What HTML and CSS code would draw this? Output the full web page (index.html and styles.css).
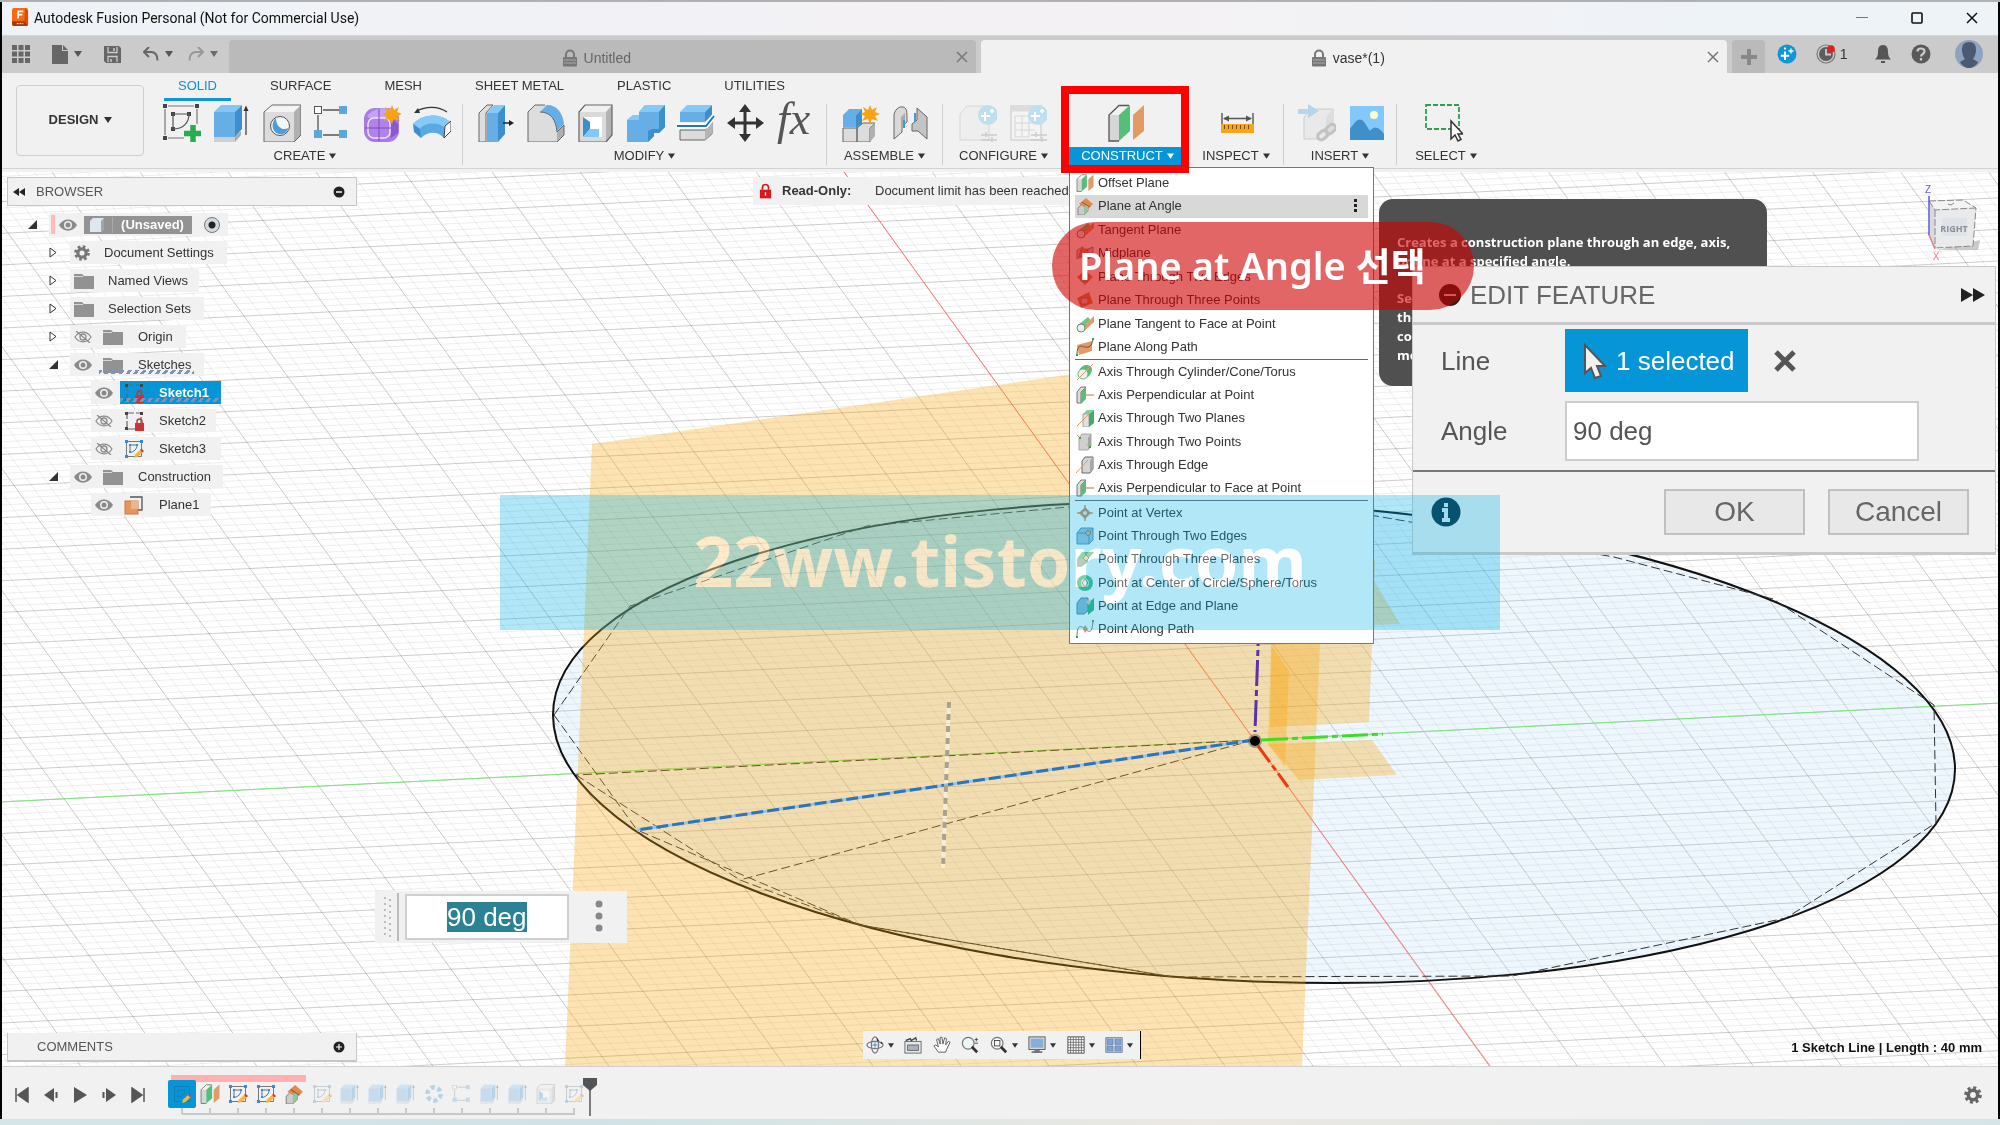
FILE: index.html
```html
<!DOCTYPE html>
<html lang="en">
<head>
<meta charset="utf-8">
<title>Autodesk Fusion Personal (Not for Commercial Use)</title>
<link rel="stylesheet" href="styles.css">
<script src="scene.js" defer></script>
</head>
<body>
<svg class="defs" aria-hidden="true">
  <symbol id="caret" viewBox="0 0 8 6"><path d="M0 0H8L4 6Z" fill="currentColor"/></symbol>
  <symbol id="lock" viewBox="0 0 16 18"><path d="M4 8V5.500a4 4 0 0 1 8 0V8" fill="none" stroke="currentColor" stroke-width="2"/><rect x="1" y="8" width="14" height="9.500" rx="1" fill="currentColor"/><path d="M2 11H14M2 14H14" stroke="#aaa" stroke-width="1"/></symbol>
  <symbol id="close" viewBox="0 0 12 12"><path d="M1 1L11 11M11 1L1 11" stroke="currentColor" stroke-width="1.500"/></symbol>
  <symbol id="eye" viewBox="0 0 18 12"><path d="M0 6C4-1.500 14-1.500 18 6C14 13.500 4 13.500 0 6Z" fill="#8a8a8a"/><circle cx="9" cy="6" r="4" fill="#f1f1f1"/><circle cx="9" cy="6" r="2.500" fill="#8a8a8a"/></symbol>
  <symbol id="eye-off" viewBox="0 0 18 12"><path d="M1 6C5-.500 13-.500 17 6C13 12.500 5 12.500 1 6Z" fill="none" stroke="#8a8a8a" stroke-width="1.200"/><circle cx="9" cy="6" r="3" fill="none" stroke="#8a8a8a" stroke-width="1.300"/><path d="M2 0L16 12" stroke="#8a8a8a" stroke-width="1.300"/></symbol>
  <symbol id="folder" viewBox="0 0 20 16"><path d="M0 1H8L10 3H20V16H0Z" fill="#929292"/><path d="M0 3.500H9" stroke="#d8d8d8"/></symbol>
  <symbol id="gear" viewBox="0 0 18 18"><circle cx="9" cy="9" r="4.700" fill="none" stroke="currentColor" stroke-width="3.600"/><circle cx="9" cy="9" r="7.300" fill="none" stroke="currentColor" stroke-width="3" stroke-dasharray="3 2.730"/></symbol>
  <symbol id="sketch" viewBox="0 0 20 20"><path d="M2.500 2.500H17.500V17.500H2.500Z" fill="none" stroke="#777"/><path d="M6 6H13C13 10 10 13 6 13.500Z" fill="none" stroke="#5a6f80"/><g fill="#2f8fd8"><rect x="1" y="1" width="3" height="3"/><rect x="16" y="1" width="3" height="3"/><rect x="1" y="16" width="3" height="3"/><rect x="5" y="5" width="2" height="2"/><rect x="12" y="5" width="2" height="2"/><rect x="5" y="12" width="2" height="2"/></g><path d="M10 19L11 15.500L16 11L18.500 13.500L13.500 18Z" fill="#f4b63c"/><path d="M16 11L17.500 9.500L20 12L18.500 13.500Z" fill="#d93a34"/></symbol>
  <symbol id="sketch-lock" viewBox="0 0 20 20"><path d="M3 2H17V18H3Z" fill="none" stroke="#666" stroke-width="1.200" stroke-dasharray="7 2"/><g fill="#444"><rect x="1" y="1" width="3" height="3"/><rect x="16" y="1" width="3" height="3"/><rect x="1" y="16" width="3" height="3"/></g><rect x="11" y="12" width="9" height="8" fill="#c9333a"/><path d="M13 12V10.500a2.500 2.500 0 0 1 5 0V12" fill="none" stroke="#c9333a" stroke-width="1.500"/></symbol>
  <symbol id="extrude" viewBox="0 0 38 38"><path d="M1 31L6 33L22 33L28 27V31L22 38H1Z" fill="#a9a9a9"/><path d="M1 33H22V38H1Z" fill="#cfcfcf"/><path d="M1 8L8 1H29L22 8Z" fill="#83c7f7"/><path d="M1 8H22V33H1Z" fill="#66aee5"/><path d="M22 8L29 1V25L22 33Z" fill="#3c8fcd"/><path d="M33 31V5" stroke="#333" stroke-width="1.200"/><path d="M30.500 7L33 1.500L35.500 7Z" fill="#333"/></symbol>
  <symbol id="shell" viewBox="0 0 38 38"><path d="M2 8L8 1H35L29 8Z" fill="#f0f0f0"/><path d="M29 8L35 1V31L29 38Z" fill="#b3b3b3"/><path d="M2 8H29V38H2Z" fill="#dadada"/><path d="M2 38V8L8 1H35V31L29 38Z" fill="none" stroke="#666" stroke-width="1.200"/><path d="M6 13H25V33H6Z" fill="#fff"/><path d="M6 13L13 18V25L6 33Z" fill="#3c8fcd"/><path d="M6 33L13 25H22V33Z" fill="#83c7f7"/></symbol>
  <symbol id="pattern" viewBox="0 0 38 38"><path d="M10 6H26M5 11V27M10 31H26" stroke="#555" stroke-width="1.300"/><rect x="1.500" y="2.500" width="7" height="7" fill="#fff" stroke="#555"/><g fill="#5aa7e0"><rect x="26" y="2" width="8" height="8"/><rect x="1" y="26" width="8" height="8"/><rect x="26" y="26" width="8" height="8"/></g></symbol>
  <symbol id="offset-plane" viewBox="0 0 38 38"><path d="M2 11L12 2H22L12 11V37H2Z" fill="#f2f2f2"/><path d="M2 11H12V37H2Z" fill="#d6d6d6"/><path d="M12 37H2V11L12 1.500H22" fill="none" stroke="#555" stroke-width="1.300"/><path d="M12 11L23 1V27L12 37Z" fill="#53bf79"/><path d="M26 11L37 1V27L26 36Z" fill="#e39a64"/></symbol>
  <symbol id="plane-angle" viewBox="0 0 18 18"><path d="M2 11L6 7H12V14L8 18H2Z" fill="#ccc" stroke="#777" stroke-width=".800"/><path d="M3 7L10 1L17 7L11 13L8 10Z" fill="#e08a4e"/><path d="M8 10L12 7V14L8 18Z" fill="#8fc79f"/><path d="M6 5L14 10" stroke="#8c5a30"/></symbol>
  <symbol id="plane-tangent" viewBox="0 0 18 18"><path d="M2 10L12 2L16 7L8 16Z" fill="#6cc48a"/><path d="M7 17L18 7V1L10 9Z" fill="#e39a64"/><circle cx="5" cy="13" r="4" fill="#eee" stroke="#6a8b75"/></symbol>
  <symbol id="plane-mid" viewBox="0 0 18 18"><path d="M1 6L7 3V12L1 15Z" fill="#ccc" stroke="#777" stroke-width=".800"/><path d="M5 5H16L13 13H3Z" fill="#e08a4e" stroke="#8c5a30" stroke-width=".600"/><path d="M12 5L17 3V12L12 15Z" fill="#ccc" stroke="#777" stroke-width=".800"/></symbol>
  <symbol id="plane-edges" viewBox="0 0 18 18"><path d="M1 9L9 2L17 9L9 17Z" fill="#e08a4e"/><path d="M5 7H12V13H5Z" fill="#ccc" stroke="#777" stroke-width=".800"/></symbol>
  <symbol id="plane-points" viewBox="0 0 18 18"><path d="M1 7L13 1L17 12L5 17Z" fill="#e08a4e"/><path d="M5 7H12V13H5Z" fill="#ccc" stroke="#777" stroke-width=".800"/></symbol>
  <symbol id="plane-path" viewBox="0 0 18 18"><path d="M1 7L16 3V13L3 17Z" fill="#e39a64"/><path d="M1 17C1 6 5 8 9 9S16 8 17 1" fill="none" stroke="#555"/><rect x="0" y="16" width="2" height="2" fill="#2ba84a"/><rect x="16" y="0" width="2" height="2" fill="#2ba84a"/></symbol>
  <symbol id="axis-cyl" viewBox="0 0 18 18"><path d="M3 8C6 0 15 1 16 6C16 10 13 14 10 15Z" fill="#55bf7b"/><ellipse cx="7" cy="11" rx="5" ry="5" fill="#e9f3ec" stroke="#78a98a"/><path d="M1 17L17 1" stroke="#e39a64"/></symbol>
  <symbol id="axis-face" viewBox="0 0 18 18"><path d="M1 6L5 1H10L5 6V17H1Z" fill="#ddd" stroke="#777"/><path d="M5 6L10 1V13L5 18Z" fill="#55bf7b"/><path d="M8 9H18" stroke="#c98b5a" stroke-width="1.200"/></symbol>
  <symbol id="axis-planes" viewBox="0 0 18 18"><path d="M7 5H13V18H7Z" fill="#e2e2e2" stroke="#888" stroke-width=".700"/><path d="M7 5L11 1H18L13 5Z" fill="#7fd09b"/><path d="M13 5L18 1V14L13 18Z" fill="#3fae66"/><path d="M1 17L13 5" stroke="#e39a64"/></symbol>
  <symbol id="axis-box" viewBox="0 0 18 18"><path d="M6 5L9 1H17V13L14 17H6Z" fill="#d4d4d4" stroke="#666"/><path d="M14 5L17 1V13L14 17Z" fill="#a5a5a5"/><path d="M0 17L12 4" stroke="#e39a64"/></symbol>
  <symbol id="axis-points" viewBox="0 0 18 18"><path d="M3 5L6 1H15V13L12 17H3Z" fill="#d0d0d0" stroke="#999" stroke-width=".800"/><path d="M12 5L15 1V13L12 17Z" fill="#a5a5a5"/><path d="M1 2L17 17" stroke="#e39a64" stroke-dasharray="4 9"/><rect x="3" y="4" width="2" height="2" fill="#2ba84a"/><rect x="13" y="13" width="2" height="2" fill="#2ba84a"/></symbol>
  <symbol id="pt-vertex" viewBox="0 0 18 18"><path d="M9 1V17M1 9H17" stroke="#a56b3c"/><path d="M9 3L15 9L9 15L3 9Z" fill="#d08a52"/><circle cx="9" cy="9" r="2" fill="#eee"/></symbol>
  <symbol id="pt-box" viewBox="0 0 18 18"><path d="M1 6L5 1H17V13L13 17H1Z" fill="#9cc4e0" stroke="#5d8fb0"/><path d="M1 6H13V17M13 6L17 1" fill="none" stroke="#5d8fb0"/><path d="M12 3L15 6L12 9L9 6Z" fill="#e0b080" stroke="#876"/></symbol>
  <symbol id="pt-planes" viewBox="0 0 18 18"><path d="M1 9L6 2H18L12 9V12L5 17H1Z" fill="#5fc586"/><path d="M1 9H10L5 17H1Z" fill="#9bb5a5"/><path d="M10 5L13 8L10 11L7 8Z" fill="#e0c8a8" stroke="#687"/></symbol>
  <symbol id="pt-center" viewBox="0 0 18 18"><circle cx="9" cy="9" r="8" fill="#45bd80"/><circle cx="9" cy="9" r="4" fill="#d8e6dc"/><path d="M9 5L12 9L9 13L6 9Z" fill="none" stroke="#777"/></symbol>
  <symbol id="pt-edge" viewBox="0 0 18 18"><path d="M1 6L5 1H12V14L8 17H1Z" fill="#8fb7d4" stroke="#55829f"/><path d="M12 6L18 1V13L12 18Z" fill="#35b277"/><path d="M13 2L15 5L13 8L10 5Z" fill="#e0c8a8"/></symbol>
  <symbol id="pt-path" viewBox="0 0 18 18"><path d="M1 17C1 5 4 5 9 9S16 13 17 1" fill="none" stroke="#777"/><path d="M9 5L12 9L9 13L7 9Z" fill="#c9986c"/><rect x="0" y="16" width="2" height="2" fill="#2ba84a"/><rect x="16" y="0" width="2" height="2" fill="#2ba84a"/></symbol>
</svg>

<div class="behind"></div>
<div class="app">
  <header class="titlebar">
    <svg class="logo" viewBox="0 0 18 20"><rect width="17" height="19" rx="2" fill="#f96a10"/><path d="M0 14H17V17a2 2 0 0 1-2 2H2a2 2 0 0 1-2-2Z" fill="#a43c06"/><path d="M14 0L17 3V19L13 14Z" fill="#d2500a"/><path d="M6.500 11V3.500H12M6.500 7H11" fill="none" stroke="#fff" stroke-width="1.800"/><path d="M5 16.500H12" stroke="#fff" stroke-dasharray="2 1"/></svg>
    <h1>Autodesk Fusion Personal (Not for Commercial Use)</h1>
    <div class="window-buttons">
      <button aria-label="Minimize"><svg width="12" height="12" viewBox="0 0 12 12"><path d="M0 5.500H12" stroke="#777"/></svg></button>
      <button aria-label="Maximize"><svg width="12" height="12" viewBox="0 0 12 12"><rect x="1" y="1" width="10" height="10" rx="1" fill="none" stroke="#111" stroke-width="1.600"/></svg></button>
      <button aria-label="Close"><svg width="12" height="12"><use href="#close"/></svg></button>
    </div>
  </header>

  <nav class="tabbar">
    <div class="quick">
      <button aria-label="Data panel"><svg width="18" height="18" viewBox="0 0 18 18" fill="#666"><path d="M0 0h5v5H0zM6.500 0h5v5h-5zM13 0h5v5h-5zM0 6.500h5v5H0zM6.500 6.500h5v5h-5zM13 6.500h5v5h-5zM0 13h5v5H0zM6.500 13h5v5h-5zM13 13h5v5h-5z"/></svg></button>
      <button class="file" aria-label="File"><svg width="16" height="19" viewBox="0 0 16 19"><path d="M0 0H10V6H16V19H0Z" fill="#666"/><path d="M11 0L16 5H11Z" fill="#666"/></svg><svg class="caret"><use href="#caret"/></svg></button>
      <button class="save" aria-label="Save"><svg width="17" height="17" viewBox="0 0 17 17"><path d="M0 0H15L17 2V17H2L0 15Z" fill="#666"/><path d="M4 1V6.500H13V1M4 16V10.500H13V16" fill="none" stroke="#cbcbcb" stroke-width="1.300"/><path d="M7 13V16M10 2V5" stroke="#cbcbcb" stroke-width="1.500"/></svg></button>
      <button class="undo" aria-label="Undo"><svg width="16" height="14" viewBox="0 0 16 14"><path d="M6 0L1 5L6 10M1 5H8C12 5 14.500 8 14.500 13.500" fill="none" stroke="#666" stroke-width="2"/></svg><svg class="caret"><use href="#caret"/></svg></button>
      <button class="redo" aria-label="Redo"><svg width="16" height="14" viewBox="0 0 16 14"><path d="M10 0L15 5L10 10M15 5H8C4 5 1.500 8 1.500 13.500" fill="none" stroke="#8c8c8c" stroke-width="2"/></svg><svg class="caret"><use href="#caret"/></svg></button>
    </div>
    <div class="doc-tab idle"><span class="doc-name"><svg width="16" height="18"><use href="#lock"/></svg>Untitled</span><button aria-label="Close Untitled"><svg width="12" height="12"><use href="#close"/></svg></button></div>
    <div class="doc-tab"><span class="doc-name"><svg width="16" height="18"><use href="#lock"/></svg>vase*(1)</span><button aria-label="Close vase"><svg width="12" height="12"><use href="#close"/></svg></button></div>
    <button class="add" aria-label="New design"><svg width="16" height="16" viewBox="0 0 16 16"><path d="M8 0V16M0 8H16" stroke="#888" stroke-width="4"/></svg></button>
    <div class="account">
      <button aria-label="Extensions"><svg width="20" height="20" viewBox="0 0 20 20"><circle cx="10" cy="10" r="9.500" fill="#0f96d8"/><path d="M8 7.500V16M3.800 11.700H12.200" stroke="#fff" stroke-width="2"/><path d="M14 4.500V9.500M11.500 7H16.500M8 3.500V5.500M7 4.500H9" stroke="#fff" stroke-width="1.400"/></svg></button>
      <button class="jobs" aria-label="Job status"><svg width="20" height="20" viewBox="0 0 20 20"><circle cx="10" cy="10" r="9" fill="none" stroke="#777" stroke-width="1.200"/><circle cx="10" cy="10" r="7" fill="#5d5d5d"/><path d="M10 5V10.500H15" fill="none" stroke="#ccc" stroke-width="1.800"/><circle cx="15" cy="5" r="3.800" fill="#e0201f"/></svg>1</button>
      <button aria-label="Notifications"><svg width="18" height="20" viewBox="0 0 18 20"><path d="M9 1C13 1 14 4 14 8C14 12 15 13.500 17 15.500H1C3 13.500 4 12 4 8C4 4 5 1 9 1ZM7 17H11V19H7Z" fill="#555"/></svg></button>
      <button aria-label="Help"><svg width="20" height="20" viewBox="0 0 20 20"><circle cx="10" cy="10" r="9.500" fill="#5a5a5a"/><path d="M6.500 7.500C6.500 3.500 13.500 3.500 13.500 7.500C13.500 10 10 10 10 12.500M10 14V16.500" fill="none" stroke="#ccc" stroke-width="2.200"/></svg></button>
      <button class="profile" aria-label="Profile"><svg width="28" height="28" viewBox="0 0 28 28"><circle cx="14" cy="14" r="14" fill="#8ea3c0"/><path d="M14 2C20 2 21 6 21 10C21 14 19 18 18 19L23 22C21 26 17 28 14 28C11 28 7 26 5 22L10 19C9 18 7 14 7 10C7 6 8 2 14 2Z" fill="#4a5a72"/></svg></button>
    </div>
  </nav>

  <section class="ribbon">
    <button class="workspace">DESIGN <svg class="caret"><use href="#caret"/></svg></button>
    <div class="tools">
      <div class="tool-tabs">
        <button class="on">SOLID</button><button>SURFACE</button><button>MESH</button><button>SHEET METAL</button><button>PLASTIC</button><button>UTILITIES</button>
      </div>
      <div class="groups">
        <div class="group create">
          <div class="icons">
            <svg viewBox="0 0 38 38"><path d="M5 2H31M2 5V31M5 34H21M34 5V20" stroke="#777" stroke-width="1.200"/><g fill="#444"><rect y="0" width="4" height="4"/><rect x="32" width="4" height="4"/><rect y="32" width="4" height="4"/><rect x="8" y="8" width="4" height="4"/><rect x="24" y="8" width="4" height="4"/><rect x="8" y="23" width="4" height="4"/></g><path d="M10 10H26C26 19 20 25 10 25Z" fill="none" stroke="#555" stroke-width="1.200"/><path d="M30 21V38M21 29.500H38" stroke="#2bab50" stroke-width="5.500"/></svg>
            <svg><use href="#extrude"/></svg>
            <svg viewBox="0 0 38 38"><path d="M1 8L9 1H38V31L31 38H1Z" fill="#dcdcdc"/><path d="M1 8L9 1H38L31 8Z" fill="#f4f4f4"/><path d="M31 8L38 1V31L31 38Z" fill="#b0b0b0"/><path d="M1 38V8L9 1H38V31L31 38Z" fill="none" stroke="#666"/><circle cx="17" cy="22" r="9.500" fill="#f5f5f5" stroke="#555"/><path d="M13 14C8 18 8 28 16 30C22 31 25 27 25 24C21 27 13 24 13 14Z" fill="#4c9ddb"/></svg>
            <svg><use href="#pattern"/></svg>
            <svg viewBox="0 0 38 38"><rect x="1" y="4" width="35" height="34" rx="11" fill="#a97ae6"/><path d="M4 12C10 4 24 2 32 7L28 14H6Z" fill="#c6a2f5"/><rect x="5" y="14" width="22" height="20" rx="6" fill="#b083ea" stroke="#efe4ff" stroke-width="1.500"/><path d="M16 5V37M2 24H34" stroke="#7a4ac0" fill="none"/><path d="M28 13V34L35 29V20Z" fill="#8a57cf"/><path d="M29 1L31 6L36 3L34 8L39 10L34 12L37 17L31 15L29 20L26 15L21 17L24 12L19 10L24 8L22 3L27 6Z" fill="#f6a416"/></svg>
            <svg viewBox="0 0 38 38"><path d="M0 20C10 9 28 9 37 18L31 34C25 27 15 27 8 34Z" fill="#5aa9e2"/><path d="M0 20C10 9 28 9 37 18L32 24C26 18 12 18 7 25Z" fill="#85c9f8"/><path d="M0 20L7 25L8 34L1 28Z" fill="#3c8fcd"/><path d="M32 22L38 17V27L31 34Z" fill="#fff" stroke="#444"/><path d="M4 7C13 2 25 2 34 8" fill="none" stroke="#333" stroke-width="1.200"/><path d="M1 9L5 4L7 9Z" fill="#333"/></svg>
          </div>
          <button class="label">CREATE <svg class="caret"><use href="#caret"/></svg></button>
        </div>
        <div class="group modify">
          <div class="icons">
            <svg viewBox="0 0 38 38"><path d="M2 9L10 1H16L9 9V38H2Z" fill="#dedede" stroke="#666"/><path d="M10 9L17 1H28L21 9Z" fill="#85c9f8"/><path d="M10 9H21V38H10Z" fill="#66aee5"/><path d="M21 9L28 1V30L21 38Z" fill="#3c8fcd"/><path d="M26 19H33" stroke="#222" stroke-width="1.500"/><path d="M32 16L37 19L32 22Z" fill="#222"/></svg>
            <svg viewBox="0 0 38 38"><path d="M1 38V8L8 1H20L37 22V31L30 38Z" fill="#ddd"/><path d="M13 8L20 1C30 1 36 9 37 20L30 27C29 15 23 8 13 8Z" fill="#66aee5"/><path d="M30 28L37 21V31L30 38Z" fill="#b0b0b0"/><path d="M18 1H8L1 8V38H30L37 31V21L30 28C29 16 24 8 13 8" fill="none" stroke="#666"/></svg>
            <svg><use href="#shell"/></svg>
            <svg viewBox="0 0 38 38"><path d="M0 16L6 11H12V8L18 1H38V23L32 29H27V32L21 38H0Z" fill="#66aee5"/><path d="M12 8L18 1H38L32 8Z" fill="#85c9f8"/><path d="M0 16L6 11H12V16Z" fill="#85c9f8"/><path d="M32 8L38 1V23L32 29H27V32L21 38V27L25 25H32Z" fill="#3c8fcd"/></svg>
            <svg viewBox="0 0 38 38"><path d="M3 8L10 1H35L28 8Z" fill="#85c9f8"/><path d="M3 8H28V18H3Z" fill="#66aee5"/><path d="M28 8L35 1V11L28 18Z" fill="#3c8fcd"/><path d="M3 26H28L35 18V30L28 36H3Z" fill="#dcdcdc" stroke="#666"/><path d="M28 26L35 18V30L28 36Z" fill="#b5b5b5"/><path d="M0 22H29L37 12" fill="none" stroke="#fff" stroke-width="5"/><path d="M0 22H29L37 12" fill="none" stroke="#1f78bd" stroke-width="2"/></svg>
            <svg viewBox="0 0 38 38"><path d="M18 6V32M6 19H31" stroke="#333" stroke-width="3"/><path d="M12 8L18 0L24 8ZM12 30L18 38L24 30ZM8 13L0 19L8 25ZM29 13L37 19L29 25Z" fill="#333"/></svg>
            <span class="fx">fx</span>
          </div>
          <button class="label">MODIFY <svg class="caret"><use href="#caret"/></svg></button>
        </div>
        <div class="group assemble">
          <div class="icons">
            <svg viewBox="0 0 38 38"><path d="M1 11L7 5H20L14 11V23H1Z" fill="#66aee5"/><path d="M14 11L20 5V20L14 24Z" fill="#3c8fcd"/><path d="M1 24H15V38H1ZM15 24L21 19H33L28 24V38H15Z" fill="#dcdcdc" stroke="#666"/><path d="M28 24L33 19V32L28 38Z" fill="#b0b0b0"/><path d="M28 1L30 6L35 3L33 8L38 10L33 12L36 17L30 15L28 20L26 15L20 17L23 12L18 10L23 8L21 3L26 6Z" fill="#f6a416"/></svg>
            <svg viewBox="0 0 38 38"><path d="M2 12C2 6 7 2 11 3C15 4 15 7 15 18L10 22V28L2 35Z" fill="#d9d9d9" stroke="#666"/><path d="M9 13L13 9V22L9 26Z" fill="#aaa"/><path d="M35 35L26 27L20 27V20L25 16V4L35 13Z" fill="#c4c4c4" stroke="#666"/><path d="M12 16V24M23 9V18" stroke="#3a9be0" stroke-width="2"/></svg>
          </div>
          <button class="label">ASSEMBLE <svg class="caret"><use href="#caret"/></svg></button>
        </div>
        <div class="group configure">
          <div class="icons">
            <svg viewBox="0 0 38 38"><path d="M1 10L8 2H30V36H1Z" fill="#eee" stroke="#d6d6d6"/><circle cx="29" cy="11" r="10" fill="#bddff0"/><path d="M26 8V17M22 12H31M33 5V9M31 7H35" stroke="#fff" stroke-width="2"/><path d="M22 31H38M22 36H38M27 28V33M33 33V38" stroke="#ccc" stroke-width="1.500"/></svg>
            <svg viewBox="0 0 38 38"><path d="M2 2H32V36H2Z" fill="#f4f4f4" stroke="#dcdcdc" stroke-width="2"/><path d="M2 5H30" stroke="#dcdcdc" stroke-width="5"/><path d="M6 12V33M13 12V33M20 12V33M6 12H20M6 19H26M6 26H26M6 33H20" stroke="#d5d5d5"/><circle cx="29" cy="11" r="10" fill="#bddff0"/><path d="M26 8V17M22 12H31M33 5V9M31 7H35" stroke="#fff" stroke-width="2"/><path d="M22 31H38M22 36H38M27 28V33M33 33V38" stroke="#ccc" stroke-width="1.500"/></svg>
          </div>
          <button class="label">CONFIGURE <svg class="caret"><use href="#caret"/></svg></button>
        </div>
        <div class="group construct">
          <div class="icons"><svg><use href="#offset-plane"/></svg></div>
          <button class="label">CONSTRUCT <svg class="caret"><use href="#caret"/></svg></button>
        </div>
        <div class="group inspect">
          <div class="icons"><svg viewBox="0 0 38 38"><path d="M3 9V20M34 9V20M5 14.500H32" stroke="#555" stroke-width="1.400"/><path d="M4 14.500L10 11.500V17.500ZM33 14.500L27 11.500V17.500Z" fill="#555"/><rect x="2" y="20" width="33" height="9" fill="#f7a51c"/><path d="M5 23H33" stroke="#7a4f00" stroke-width="4" stroke-dasharray="1 3"/></svg></div>
          <button class="label">INSPECT <svg class="caret"><use href="#caret"/></svg></button>
        </div>
        <div class="group insert">
          <div class="icons">
            <svg viewBox="0 0 38 38"><path d="M6 13L14 5H35V28L28 35H6Z" fill="#e9e9e9" stroke="#ccc"/><path d="M28 13L35 5V28L28 35Z" fill="#ddd"/><path d="M0 5H10V0L21 7L10 14V10H0Z" fill="#b5d6ee"/><g fill="none" stroke="#c2c2c2" stroke-width="3"><rect x="19" y="28" width="11" height="7" rx="3.500" transform="rotate(-40 24 31)"/><rect x="27" y="22" width="11" height="7" rx="3.500" transform="rotate(-40 32 25)"/></g></svg>
            <svg viewBox="0 0 38 38"><rect x="2" y="2" width="34" height="34" fill="#82c8fb"/><path d="M2 25C7 18 11 12 16 18L22 27C26 22 30 22 36 30V36H2Z" fill="#3f8fca"/><circle cx="26" cy="11" r="4" fill="#fffbd0"/></svg>
          </div>
          <button class="label">INSERT <svg class="caret"><use href="#caret"/></svg></button>
        </div>
        <div class="group select">
          <div class="icons"><svg viewBox="0 0 38 38"><rect x="1" y="1" width="33" height="24" fill="none" stroke="#2ba050" stroke-width="1.800" stroke-dasharray="5 2"/><path d="M26 17V35L30 31L33 37L36 35.500L33 30H38Z" fill="#fff" stroke="#333" stroke-width="1.500"/></svg></div>
          <button class="label">SELECT <svg class="caret"><use href="#caret"/></svg></button>
        </div>
      </div>
    </div>
  </section>

  <main class="viewport">
    <svg class="scene" viewBox="0 172 2000 894" preserveAspectRatio="xMidYMid slice" aria-hidden="true">
      <path id="grid-minor" fill="none" stroke="#000" stroke-opacity=".07"/>
      <path id="grid-major" fill="none" stroke="#000" stroke-opacity=".2"/>
      <circle r="1" transform="matrix(701 27 0 239.500 1254 742)" fill="#8ecbf2" fill-opacity=".16"/>
      <path d="M0 802L2000 703" stroke="#7be87b" stroke-width="1"/>
      <path d="M844 172L1490 1066" stroke="#f77" stroke-width="1"/>
      <circle r="1" transform="matrix(701 27 0 239.500 1254 742)" fill="none" stroke="#111" stroke-width="2" vector-effect="non-scaling-stroke"/>
      <g fill="none" stroke="#333" stroke-dasharray="9 4">
        <path d="M554 715L630 606L867 526L1110 503M1370 515L1614 557L1773 599L1934 705L1936 823L1786 918L1512 976L1173 977L860 925L637 830"/>
        <path d="M554 715L637 830M576 775L740 880L860 925L1173 977"/>
        <path d="M1254 740L576 775M1254 740L740 880"/>
      </g>
      <g fill="#fda200" fill-opacity=".3">
        <path d="M592 444L1333 336L1302 1066H565Z"/>
        <path d="M1270 727L1369 722L1375 560H1273Z"/>
        <path d="M1268 744L1372 740L1397 775L1299 780Z"/>
        <path d="M1271 645L1289 671L1285 767L1268 744Z"/>
        <path d="M1262 540H1350L1400 624L1262 630Z"/>
      </g>
      <path d="M1254 740L637 830" stroke="#9cc4e8" stroke-width="3"/>
      <path d="M1254 740L637 830" stroke="#2f74b8" stroke-width="3" stroke-dasharray="12 4"/>
      <path d="M949 702L943 868" stroke="#fff" stroke-opacity=".5" stroke-width="4"/>
      <path d="M949 702L943 868" stroke="#aaa08c" stroke-width="4" stroke-dasharray="6 6"/>
      <path d="M1259 620L1255 732" stroke="#5b32a8" stroke-width="3" stroke-dasharray="26 4 6 4"/>
      <path d="M1262 740L1383 734" stroke="#3fdc26" stroke-width="3" stroke-dasharray="26 4 6 4"/>
      <path d="M1258 746L1288 787" stroke="#ee3a10" stroke-width="3" stroke-dasharray="20 4 6 4"/>
      <circle cx="1255" cy="741" r="7" fill="#555" fill-opacity=".5"/><circle cx="1255" cy="741" r="5" fill="#000"/>
    </svg>

    <div class="top-row">
      <aside class="browser">
        <div class="panel-head"><svg width="12" height="8" viewBox="0 0 12 8"><path d="M6 0V8L0 4ZM12 0V8L6 4Z" fill="#222"/></svg><span>BROWSER</span><svg class="knob" viewBox="0 0 12 12"><circle cx="6" cy="6" r="5.500" fill="#222"/><path d="M3 6H9" stroke="#fff" stroke-width="1.500"/></svg></div>
        <ul class="tree">
          <li class="root"><svg class="open"><path d="M9 0V9H0Z" fill="#333"/></svg><div class="cell"><i></i><svg class="eye"><use href="#eye"/></svg><span class="doc"><svg width="16" height="16" viewBox="0 0 16 16"><path d="M1 4L4 1H15V12L12 15H1Z" fill="#dfe6ee"/><path d="M12 4L15 1V12L12 15Z" fill="#9aa6b5"/></svg><b>(Unsaved)</b></span><input type="radio" checked aria-label="Activate component"></div></li>
          <li class="l1"><svg class="shut"><path d="M1 1L7 5.500L1 10Z" fill="#fff" stroke="#333"/></svg><div class="cell w157"><svg class="gear"><use href="#gear"/></svg><span class="t1">Document Settings</span></div></li>
          <li class="l1"><svg class="shut"><path d="M1 1L7 5.500L1 10Z" fill="#fff" stroke="#333"/></svg><div class="cell w129"><svg class="folder"><use href="#folder"/></svg><span class="t1">Named Views</span></div></li>
          <li class="l1"><svg class="shut"><path d="M1 1L7 5.500L1 10Z" fill="#fff" stroke="#333"/></svg><div class="cell w133"><svg class="folder"><use href="#folder"/></svg><span class="t1">Selection Sets</span></div></li>
          <li class="l1"><svg class="shut"><path d="M1 1L7 5.500L1 10Z" fill="#fff" stroke="#333"/></svg><div class="cell w116"><svg class="eye"><use href="#eye-off"/></svg><svg class="folder"><use href="#folder"/></svg><span class="t2">Origin</span></div></li>
          <li class="l1"><svg class="open"><path d="M9 0V9H0Z" fill="#333"/></svg><div class="cell w133"><svg class="eye"><use href="#eye"/></svg><span class="hatched"><svg class="folder"><use href="#folder"/></svg><span class="t2">Sketches</span></span></div></li>
          <li class="l2"><div class="cell w130"><svg class="eye"><use href="#eye"/></svg><span class="picked hatched"><svg class="sk"><use href="#sketch-lock"/></svg><b>Sketch1</b></span></div></li>
          <li class="l2"><div class="cell w125"><svg class="eye"><use href="#eye-off"/></svg><svg class="sk"><use href="#sketch-lock"/></svg><span class="t2">Sketch2</span></div></li>
          <li class="l2"><div class="cell w130"><svg class="eye"><use href="#eye-off"/></svg><svg class="sk"><use href="#sketch"/></svg><span class="t2">Sketch3</span></div></li>
          <li class="l1"><svg class="open"><path d="M9 0V9H0Z" fill="#333"/></svg><div class="cell w153"><svg class="eye"><use href="#eye"/></svg><svg class="folder"><use href="#folder"/></svg><span class="t2">Construction</span></div></li>
          <li class="l2"><div class="cell w120"><svg class="eye"><use href="#eye"/></svg><svg class="sk" viewBox="0 0 20 20"><path d="M6 2H18V15H14" fill="none" stroke="#555" stroke-width="1.300"/><rect x="1" y="6" width="13" height="13" fill="#e2955c" stroke="#c97b40"/><rect x="7" y="6" width="7" height="8" fill="#eeb48b"/></svg><span class="t2">Plane1</span></div></li>
        </ul>
      </aside>
      <p class="readonly"><svg width="13" height="16" viewBox="0 0 15 17"><path d="M4 7V4.500a3.500 3.500 0 0 1 7 0V7" fill="none" stroke="#d3191c" stroke-width="2"/><rect x="1" y="7" width="13" height="10" fill="#d3191c"/><path d="M7.500 10V14" stroke="#fff" stroke-width="1.500"/></svg><b>Read-Only:</b><span>Document limit has been reached</span></p>
    </div>

    <svg class="viewcube" viewBox="1920 180 70 84" aria-label="View cube">
      <path d="M1937 250H1978L1980 240Z" fill="#999" opacity=".5"/>
      <path d="M1929 201L1963 200L1976 208L1935 210Z" fill="#f3f3f4"/><path d="M1929 201L1935 210V248L1929 235Z" fill="#dadade"/><path d="M1935 210L1976 208L1973 246L1935 248Z" fill="#e9eaec"/><path d="M1942 218H1967V236H1942Z" fill="#dfe2e8"/>
      <path d="M1929 201L1963 200L1976 208L1973 246L1935 248L1929 235M1929 201L1935 210L1976 208M1935 210V248" fill="none" stroke="#888" stroke-dasharray="7 2"/>
      <path d="M1929 196V235" stroke="#5b5be0" stroke-width="1.500"/><path d="M1929 235L1935 249" stroke="#f08080" stroke-width="1.500"/>
      <path d="M1948 204L1951 205L1954 203" fill="none" stroke="#888"/>
      <text x="1928" y="193" class="axis z">Z</text><text x="1936" y="260" class="axis x">X</text><text x="1954" y="232" class="face">RIGHT</text>
    </svg>

    <div class="bottom-row">
      <div class="panel-head comments"><span>COMMENTS</span><svg class="knob" viewBox="0 0 12 12"><circle cx="6" cy="6" r="5.500" fill="#222"/><path d="M3 6H9M6 3V9" stroke="#fff" stroke-width="1.200"/></svg></div>
      <div class="navbar">
        <button aria-label="Orbit"><svg viewBox="0 0 20 20"><ellipse cx="10" cy="10" rx="9" ry="4" fill="none" stroke="#777" stroke-width="1.300"/><ellipse cx="10" cy="10" rx="4" ry="9" fill="none" stroke="#777" stroke-width="1.300"/><path d="M7 10H13M10 7V13" stroke="#3a86cc"/><path d="M12 2L15 6L12 5ZM17 6L19 9L16 8Z" fill="#222"/></svg><svg class="caret"><use href="#caret"/></svg></button>
        <button aria-label="Look at"><svg viewBox="0 0 20 20"><rect x="1" y="6" width="18" height="13" fill="#e4e6e8" stroke="#666"/><rect x="4" y="10" width="12" height="6" fill="#aab3bd" stroke="#666"/><path d="M2 5L7 3L8 5L13 2L14 5" fill="none" stroke="#444" stroke-width="1.500"/></svg></button>
        <button aria-label="Pan"><svg viewBox="0 0 20 20"><path d="M6 18L1 11L3 10L6 12L4 4L6 3L8 9V1.500H10L11 9L13 2L15 3L14 10L17 6L19 7L15 15L14 18Z" fill="#fff" stroke="#555"/></svg></button>
        <button aria-label="Zoom"><svg viewBox="0 0 20 20"><circle cx="8" cy="8" r="6.500" fill="#eef5f5" stroke="#777" stroke-width="1.300"/><path d="M12 12L18 18" stroke="#333" stroke-width="3"/><path d="M15 4H19M17 2V6M15 8H19" stroke="#444"/></svg></button>
        <button aria-label="Fit"><svg viewBox="0 0 20 20"><circle cx="8" cy="8" r="6.500" fill="#f4f6f8" stroke="#777" stroke-width="1.300"/><rect x="5" y="5" width="6" height="6" fill="none" stroke="#444"/><path d="M12 12L18 18" stroke="#333" stroke-width="3"/></svg><svg class="caret"><use href="#caret"/></svg></button>
        <button aria-label="Display settings"><svg viewBox="0 0 20 20"><rect x="1" y="1" width="18" height="14" fill="#d5d9dd" stroke="#555"/><rect x="3" y="3" width="14" height="10" fill="#86aeda"/><path d="M7 15H13V17H16V19H4V17H7Z" fill="#777"/></svg><svg class="caret"><use href="#caret"/></svg></button>
        <button aria-label="Grid and snaps"><svg viewBox="0 0 20 20"><rect x="1" y="1" width="18" height="18" fill="#fff" stroke="#444"/><path d="M4 1V19M7 1V19M10 1V19M13 1V19M16 1V19M1 4H19M1 7H19M1 10H19M1 13H19M1 16H19" stroke="#555" stroke-width=".800"/></svg><svg class="caret"><use href="#caret"/></svg></button>
        <button aria-label="Viewports"><svg viewBox="0 0 20 20"><rect x="1" y="2" width="18" height="16" fill="#dfe6ee" stroke="#4d6c92"/><path d="M2.500 3.500H9V9.500H2.500ZM11 3.500H17.500V9.500H11ZM2.500 11H9V16.500H2.500ZM11 11H17.500V16.500H11Z" fill="#7ba3d3" stroke="#4d6c92" stroke-width=".600"/></svg><svg class="caret"><use href="#caret"/></svg></button>
      </div>
      <p class="status">1 Sketch Line | Length : 40 mm</p>
    </div>

    <div class="float-input"><svg width="10" height="48" viewBox="0 0 10 48"><path d="M2 4V46M7 6V46" stroke="#bbb" stroke-width="2" stroke-dasharray="2 4"/></svg><i></i><label class="value"><input type="text" value="90 deg" aria-label="Angle value"></label><svg width="8" height="34" viewBox="0 0 8 34" fill="#888"><circle cx="4" cy="4" r="3.500"/><circle cx="4" cy="16" r="3.500"/><circle cx="4" cy="28" r="3.500"/></svg></div>
  </main>

  <footer class="timeline">
    <div class="play">
      <button aria-label="To start"><svg viewBox="0 0 16 16"><path d="M2 1V15M14 1V15L4 8Z" stroke="#555" stroke-width="1.500" fill="#555"/></svg></button>
      <button aria-label="Step back"><svg viewBox="0 0 16 16"><path d="M11 1V15L1 8Z" fill="#555"/><path d="M13.500 5V11" stroke="#555" stroke-width="2"/></svg></button>
      <button aria-label="Play"><svg viewBox="0 0 16 16"><path d="M2 0V16L15 8Z" fill="#555"/></svg></button>
      <button aria-label="Step forward"><svg viewBox="0 0 16 16"><path d="M5 1V15L15 8Z" fill="#555"/><path d="M2.500 5V11" stroke="#555" stroke-width="2"/></svg></button>
      <button aria-label="To end"><svg viewBox="0 0 16 16"><path d="M14 1V15M2 1V15L12 8Z" stroke="#555" stroke-width="1.500" fill="#555"/></svg></button>
    </div>
    <ol class="features">
      <li class="on"><svg viewBox="0 0 20 20"><path d="M2.500 2.500H17.500V17.500H2.500ZM6 6H13C13 10 10 13 6 13.500Z" fill="none" stroke="#1a7ab4"/><path d="M10 19L11 15.500L16 11L18.500 13.500L13.500 18Z" fill="#f4b63c"/><path d="M16 11L17.500 9.500L20 12L18.500 13.500Z" fill="#a8506a"/></svg></li><li><svg><use href="#offset-plane"/></svg></li><li><svg><use href="#sketch"/></svg></li><li><svg><use href="#sketch"/></svg></li><li><svg><use href="#plane-angle"/></svg></li>
      <li class="faded"><svg><use href="#sketch"/></svg></li><li class="faded"><svg><use href="#extrude"/></svg></li><li class="faded"><svg><use href="#extrude"/></svg></li><li class="faded"><svg><use href="#extrude"/></svg></li><li class="faded"><svg viewBox="0 0 18 18"><circle cx="9" cy="9" r="6" fill="none" stroke="#3c8fcd" stroke-width="4" stroke-dasharray="3.700 2.580"/></svg></li><li class="faded"><svg><use href="#pattern"/></svg></li><li class="faded"><svg><use href="#extrude"/></svg></li><li class="faded"><svg><use href="#extrude"/></svg></li><li class="faded"><svg><use href="#shell"/></svg></li><li class="faded"><svg><use href="#sketch"/></svg></li>
    </ol>
    <svg class="marker" viewBox="0 0 16 38"><path d="M1 0H15V7L8 13L1 7Z" fill="#555"/><path d="M8 8V38" stroke="#555" stroke-width="1.500"/></svg>
    <button class="settings" aria-label="Timeline settings"><svg width="18" height="18"><use href="#gear"/></svg></button>
  </footer>

  <div class="tooltip"><p>Creates a construction plane through an edge, axis,<br>or line at a specified angle.</p><p>Sel<br>the<br>con<br>mo</p></div>

  <div class="menu" role="menu">
    <div class="menu-group g8">
      <button><svg><use href="#offset-plane"/></svg>Offset Plane</button>
      <button class="hover"><svg><use href="#plane-angle"/></svg>Plane at Angle<svg class="dots" viewBox="0 0 4 14"><path d="M0 0H3V3H0ZM0 5H3V8H0ZM0 10H3V13H0Z" fill="#222"/></svg></button>
      <button><svg><use href="#plane-tangent"/></svg>Tangent Plane</button>
      <button><svg><use href="#plane-mid"/></svg>Midplane</button>
      <button><svg><use href="#plane-edges"/></svg>Plane Through Two Edges</button>
      <button><svg><use href="#plane-points"/></svg>Plane Through Three Points</button>
      <button><svg><use href="#plane-tangent"/></svg>Plane Tangent to Face at Point</button>
      <button><svg><use href="#plane-path"/></svg>Plane Along Path</button>
    </div>
    <div class="menu-group">
      <button><svg><use href="#axis-cyl"/></svg>Axis Through Cylinder/Cone/Torus</button>
      <button><svg><use href="#axis-face"/></svg>Axis Perpendicular at Point</button>
      <button><svg><use href="#axis-planes"/></svg>Axis Through Two Planes</button>
      <button><svg><use href="#axis-points"/></svg>Axis Through Two Points</button>
      <button><svg><use href="#axis-box"/></svg>Axis Through Edge</button>
      <button><svg><use href="#axis-face"/></svg>Axis Perpendicular to Face at Point</button>
    </div>
    <div class="menu-group">
      <button><svg><use href="#pt-vertex"/></svg>Point at Vertex</button>
      <button><svg><use href="#pt-box"/></svg>Point Through Two Edges</button>
      <button><svg><use href="#pt-planes"/></svg>Point Through Three Planes</button>
      <button><svg><use href="#pt-center"/></svg>Point at Center of Circle/Sphere/Torus</button>
      <button><svg><use href="#pt-edge"/></svg>Point at Edge and Plane</button>
      <button><svg><use href="#pt-path"/></svg>Point Along Path</button>
    </div>
  </div>

  <form class="dialog">
    <header><svg width="22" height="22" viewBox="0 0 22 22"><circle cx="11" cy="11" r="11" fill="#222"/><path d="M5 11H17" stroke="#ddd" stroke-width="2"/></svg><h2>EDIT FEATURE</h2><svg width="24" height="14" viewBox="0 0 24 14"><path d="M0 0V14L12 7ZM12 0V14L24 7Z" fill="#222"/></svg></header>
    <div class="fields">
      <label for="line">Line</label>
      <div class="pick"><button type="button" id="line"><svg width="24" height="38" viewBox="0 0 24 38"><path d="M2 3V31L8 26L12 36L18 34L14 24H22Z" fill="#f1f1f1" stroke="#555" stroke-width="2"/></svg>1 selected</button><button type="button" class="clear" aria-label="Clear selection"><svg width="22" height="22" viewBox="0 0 22 22"><path d="M2 2L20 20M20 2L2 20" stroke="#555" stroke-width="5"/></svg></button></div>
      <label for="angle">Angle</label>
      <input id="angle" type="text" value="90 deg">
    </div>
    <footer><svg width="30" height="30" viewBox="0 0 30 30"><circle cx="15" cy="15" r="14.500" fill="#0a2c3c"/><path d="M15 6V10M11 13H15V23M11 23H19" stroke="#e4eef2" stroke-width="4" fill="none"/></svg><button type="button">OK</button><button type="button">Cancel</button></footer>
  </form>

  <div class="watermark"><span>22ww.tistory.com</span></div>
  <div class="highlight"></div>
  <div class="caption">Plane at Angle 선택</div>
</div>
</body>
</html>
```
FILE: styles.css
```css
* { box-sizing: border-box; }
body {
  margin: 0;
  min-height: 100vh;
  display: flex;
  flex-direction: column;
  background: linear-gradient(90deg, #d3e7e9, #cfe3e6 30%, #ece8e2 60%, #d6e4e8);
  font: 13px/16px "Liberation Sans", Arial, sans-serif;
  color: #333;
}
button, input { font: inherit; color: inherit; }
button { border: 0; padding: 0; background: none; display: inline-flex; align-items: center; }
h1, h2, p, ul, ol { margin: 0; padding: 0; list-style: none; }
h1, h2 { font-weight: normal; }
svg { flex: none; display: block; }
.defs { position: absolute; width: 0; height: 0; }
.caret { width: 8px; height: 6px; color: #333; }

.behind { height: 2px; background: #b0b0b0; }
.app {
  position: relative;
  flex: 1;
  display: flex;
  flex-direction: column;
  margin-bottom: 6px;
  border: solid #000;
  border-width: 0 2px;
  background: #f1f1f1;
}

.titlebar {
  height: 34px;
  display: flex;
  align-items: center;
  padding: 0 0 2px 10px;
  gap: 5px;
  background: linear-gradient(90deg, #eef3f8, #f4f1f4 50%, #f2f2f5 70%, #eef3f8 85%);
  border-bottom: 1px solid #d8d8d8;
}
.titlebar h1 { flex: 1; font: 14px/20px Roboto, sans-serif; color: #111; }
.logo { width: 17px; height: 19px; }
.window-buttons { display: flex; gap: 43px; padding-right: 20px; color: #111; }

.tabbar { height: 37px; padding-top: 4px; display: flex; background: #cbcbcb; }
.quick { width: 227px; height: 28px; padding-left: 10px; display: flex; align-items: center; }
.quick .caret { color: #555; margin-left: 6px; }
.quick .file { margin-left: 22px; }
.quick .save { margin-left: 22px; }
.quick .undo { margin-left: 22px; }
.quick .redo { margin-left: 15px; opacity: .8; }
.doc-tab {
  flex: 1;
  display: flex;
  align-items: center;
  margin-right: 5px;
  padding-left: 18px;
  border-radius: 4px 4px 0 0;
  background: #f1f1f1;
  font-size: 14px;
}
.doc-tab.idle { background: #bababa; color: #666; }
.doc-tab svg { color: #777; }
.doc-name { flex: 1; display: flex; justify-content: center; align-items: center; gap: 6px; padding: 2px 2px 0 0; }
.doc-tab button { width: 28px; height: 28px; justify-content: center; }
.add { width: 33px; justify-content: center; background: #bababa; border-radius: 4px 4px 0 0; }
.account { width: 233px; height: 28px; padding: 0 15px 0 12px; display: flex; align-items: center; justify-content: space-between; }
.account .jobs { gap: 4px; font-size: 14px; margin: 0 8px 0 0; }
.account .profile { margin-left: 5px; }

.ribbon { height: 99px; border-bottom: 3px solid #f1f1f1; padding-left: 14px; display: flex; box-shadow: inset 0 -1px #d2d2d2; }
.workspace {
  width: 128px;
  height: 71px;
  margin-top: 12px;
  padding: 0 0 2px 1px;
  justify-content: center;
  gap: 6px;
  border: 1px solid #d0d0d0;
  border-radius: 4px;
  font-weight: bold;
}
.tools { flex: 1; padding-left: 4px; }
.tool-tabs { display: flex; gap: 25px; padding-left: 16px; height: 28px; }
.tool-tabs button { padding: 0 14px 2px; height: 28px; }
.tool-tabs .on { color: #0e8fd0; box-shadow: inset 0 -3px #0e96d8; }
.groups { display: flex; padding-top: 3px; }
.group { height: 61px; display: flex; flex-direction: column; align-items: center; justify-content: space-between; border-right: 1px solid #cfcfcf; }
.group .icons { height: 38px; display: flex; gap: 12px; padding-left: 3px; }
.group .icons svg { width: 38px; height: 38px; }
.label { gap: 4px; height: 18px; }
.label .caret { width: 7px; }
.create { width: 315px; }
.modify { width: 364px; }
.assemble { width: 116px; }
.configure { width: 118px; border-color: transparent; }
.configure .label { padding-left: 4px; }
.construct { width: 128px; border-color: transparent; }
.construct .label { width: 112px; padding-left: 6px; justify-content: center; background: #0696d7; color: #fff; }
.construct .caret { color: #fff; }
.inspect { width: 95px; }
.insert { width: 113px; }
.select { width: 98px; border: 0; }
.select .icons { padding: 0 4px 0 0; }
.fx { width: 38px; font: italic 46px/30px "Liberation Serif", serif; color: #555; }

.viewport { position: relative; flex: 1; display: flex; flex-direction: column; justify-content: space-between; background: #fff; overflow: hidden; border-bottom: 1px solid #d0d0d0; }
.scene { position: absolute; inset: 0 -2px; width: calc(100% + 4px); height: 100%; }
.top-row { position: relative; display: flex; align-items: flex-start; padding: 5px 0 0 5px; }
.browser { width: 350px; }
.panel-head {
  height: 29px;
  display: flex;
  align-items: center;
  gap: 11px;
  padding: 0 11px 0 5px;
  background: #f1f1f1;
  border: 1px solid #c6c6c6;
  color: #555;
}
.panel-head span { flex: 1; }
.knob { width: 12px; height: 12px; }
.tree { display: flex; flex-direction: column; gap: 5px; padding-top: 7px; }
.tree li { height: 23px; display: flex; align-items: center; gap: 12px; }
.tree .root { padding-left: 21px; }
.l1 { padding-left: 42px; }
.l2 { padding-left: 84px; }
.open { width: 9px; height: 9px; }
.shut { width: 9px; height: 11px; }
.cell { height: 23px; display: flex; align-items: center; background: #f1f1f1; padding-left: 4px; }
.root .cell { padding-left: 2px; width: 179px; gap: 4px; }
.root i { width: 4px; height: 19px; background: #fbb; }
.doc { height: 18px; flex: 1; margin-left: 3px; padding-left: 5px; display: flex; align-items: center; background: #939393; color: #fff; }
.doc b { flex: 1; margin-left: 7px; text-align: center; border-left: 1px solid #aaa; }
.root input { appearance: none; width: 16px; height: 16px; margin: 0 8px; border: 1px solid #777; border-radius: 50%; background: radial-gradient(#222 3px, #d4dae2 4px); }
.w157 { width: 157px; }
.w129 { width: 129px; }
.w133 { width: 134px; }
.w116 { width: 116px; }
.w130 { width: 130px; }
.w125 { width: 125px; }
.w153 { width: 153px; }
.w120 { width: 120px; }
.eye { width: 18px; height: 12px; }
.folder { width: 20px; height: 16px; }
.sk { width: 20px; height: 20px; }
.gear { width: 16px; height: 16px; color: #777; }
.t1 { margin-left: 14px; }
.t2 { margin-left: 15px; }
.eye + .folder, .eye + .sk { margin-left: 11px; }
.hatched { position: relative; align-self: stretch; display: flex; align-items: center; margin-left: 7px; padding-left: 4px; }
.hatched::after { content: ""; position: absolute; left: 0; right: -3px; bottom: 2px; height: 4px; background: repeating-linear-gradient(125deg, #7d93b8 0 3px, transparent 3px 6px); }
.picked { flex: 1; background: #0696d7; color: #fff; }
.picked::after { right: 0; }
.picked b { margin-left: 15px; }
.readonly { height: 28px; margin-left: 396px; padding-left: 6px; display: flex; align-items: center; background: #f1f1f1; width: 320px; }
.readonly b { width: 93px; margin-left: 10px; }
.viewcube { position: absolute; right: 8px; top: 8px; width: 70px; height: 84px; }
.axis { font-size: 10px; text-anchor: middle; }
.z { fill: #5b5be0; }
.x { fill: #f08080; }
.face { font: bold 9px "Open Sans", sans-serif; fill: #8b8f96; text-anchor: middle; }

.bottom-row { position: relative; display: grid; grid-template-columns: 1fr auto 1fr; align-items: center; padding: 0 16px 2px 5px; }
.comments { width: 350px; padding-left: 29px; border-width: 0 1px 2px; border-color: #c6c6c6; }
.navbar { height: 28px; margin: 0 0 5px 14px; display: flex; align-items: center; justify-content: space-between; width: 278px; padding: 0 6px 0 3px; background: #f1f1f1; border-right: 1px solid #000; }
.navbar svg { width: 18px; height: 18px; }
.navbar button { gap: 4px; }
.navbar .caret { width: 6px; height: 5px; }
.status { text-align: right; font-weight: bold; color: #111; }

.float-input { position: absolute; left: 373px; top: 719px; width: 252px; height: 52px; display: flex; align-items: center; gap: 12px; padding-left: 8px; background: #f1f1f1; }
.float-input i { width: 2px; height: 48px; margin: 0 -6px 0 -8px; background: #bbb; }
.value { width: 164px; height: 46px; margin-right: 14px; border: 2px solid #cfcfcf; background: #fff; display: flex; align-items: center; justify-content: center; }
.value input { width: 80px; height: 30px; border: 0; padding: 0; background: #2a8294; color: #fff; font-size: 26px; }

.timeline { height: 52px; display: flex; align-items: flex-start; }
.play { display: flex; gap: 13px; padding: 20px 0 0 12px; }
.play svg { width: 16px; height: 16px; }
.features { display: flex; height: 49px; margin-left: 22px; padding-top: 13px; background: linear-gradient(#ffb0b0, #ffb0b0) 3px 8px / 135px 7px no-repeat, linear-gradient(#c8c8c8, #c8c8c8) 14px 46px / 393px 2px no-repeat; }
.features li { position: relative; width: 28px; height: 28px; display: flex; align-items: center; justify-content: center; }
.features li::after { content: ""; position: absolute; left: 13px; top: 28px; width: 2px; height: 6px; background: #c8c8c8; }
.features svg { width: 20px; height: 20px; }
.features .on { background: #0696d7; border-radius: 2px; }
.faded svg { opacity: .3; }
.marker { width: 16px; height: 38px; margin-top: 11px; margin-left: -6px; }
.settings { margin: 19px 16px 0 auto; color: #666; }

.tooltip { position: absolute; left: 1377px; top: 197px; width: 388px; height: 187px; padding: 34px 18px 0; border-radius: 14px; background: #505050; color: #fff; font: bold 13px/19px "Open Sans", "Noto Sans", sans-serif; white-space: nowrap; }
.tooltip p + p { margin-top: 18px; }

.menu { position: absolute; left: 1067px; top: 165px; width: 305px; padding: 3px 5px 2px; background: #fff; border: 1px solid #777; }
.menu-group { height: 141px; display: flex; flex-direction: column; }
.menu-group + .menu-group { border-top: 1px solid #666; }
.g8 { height: 188px; }
.menu button { flex: 1; width: 100%; padding-left: 1px; gap: 4px; white-space: nowrap; }
.menu svg { width: 18px; height: 18px; }
.menu .hover { background: #d8d8d8; }
.menu .dots { width: 4px; height: 14px; margin-left: auto; margin-right: 10px; }

.dialog { position: absolute; left: 1410px; top: 264px; width: 584px; background: #f1f1f1; border: 1px solid #c9c9c9; border-bottom-width: 3px; font-size: 26px; line-height: 32px; color: #555; }
.dialog header { height: 58px; padding: 0 10px 0 26px; display: flex; align-items: center; gap: 9px; border-bottom: 3px solid #c9c9c9; color: #666; }
.dialog h2 { flex: 1; font-size: 26px; line-height: 32px; }
.fields { display: grid; grid-template-columns: 124px 1fr; row-gap: 9px; align-items: center; padding: 4px 76px 9px 28px; border-bottom: 2px solid #777; }
.pick { display: flex; gap: 26px; align-items: center; }
#line { width: 183px; height: 63px; gap: 9px; padding-left: 18px; background: #0696d7; color: #fff; }
.fields input { width: 100%; height: 60px; border: 2px solid #ccc; background: #fff; padding: 0 6px; }
.dialog footer { height: 80px; display: flex; align-items: center; padding: 0 26px 0 18px; gap: 23px; }
.dialog footer svg { margin-right: auto; }
.dialog footer button { width: 141px; height: 46px; justify-content: center; border: 2px solid #c0c0c0; background: #e8e8e8; font-size: 28px; color: #666; }

.watermark { position: absolute; left: 498px; top: 493px; width: 1000px; height: 135px; display: flex; align-items: center; justify-content: center; background: rgba(0, 175, 232, .3); font: bold 70px/90px "Noto Sans", sans-serif; color: #4e1807; }
.watermark span { mix-blend-mode: plus-lighter; padding-bottom: 6px; }
.highlight { position: absolute; left: 1059px; top: 84px; width: 128px; height: 87px; border: 8px solid #f00; }
.caption { position: absolute; left: 1050px; top: 220px; width: 422px; height: 88px; border-radius: 44px; padding-left: 27px; background: rgba(209, 0, 0, .6); color: #fff; font: 600 38px/86px "Noto Sans", "Noto Sans CJK KR", sans-serif; white-space: nowrap; }
```
FILE: scene.js
```js
// Ground grid: one unit is one major square, five minor squares to a major one.
const ORIGIN = [1254, 740];
const U = [85, -4.2];
const V = [22, 30.5];

function point(u, v) {
  return [ORIGIN[0] + u * U[0] + v * V[0], ORIGIN[1] + u * U[1] + v * V[1]];
}

function line(a, b) {
  return `M${point(...a).map(n => n.toFixed(1))}L${point(...b).map(n => n.toFixed(1))}`;
}

let minor = '';
let major = '';
const R = 30;
for (let i = -R * 5; i <= R * 5; i++) {
  const k = i / 5;
  const d = line([k, -R], [k, R]) + line([-R, k], [R, k]);
  if (i % 5) minor += d; else major += d;
}
document.getElementById('grid-minor').setAttribute('d', minor);
document.getElementById('grid-major').setAttribute('d', major);
```
